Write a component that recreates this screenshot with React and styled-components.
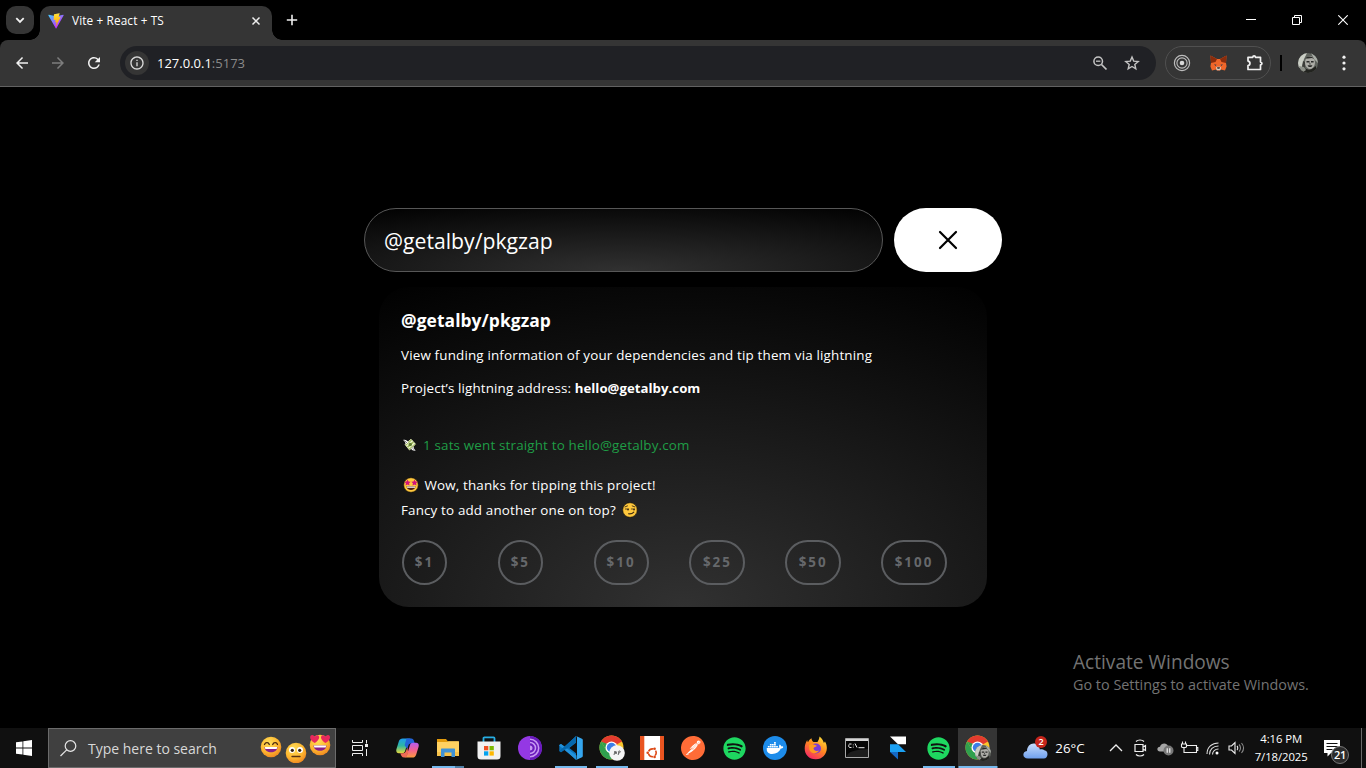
import React from "react";
import styled, { createGlobalStyle } from "styled-components";
import { MdArrowBack, MdArrowForward, MdRefresh, MdInfoOutline } from "react-icons/md";
import { FaDocker, FaSpotify } from "react-icons/fa";
import { SiPostman } from "react-icons/si";

const Global = createGlobalStyle`
  *, *::before, *::after { box-sizing: border-box; }
  html, body { margin: 0; background: #000; }
  body { font-family: "Open Sans", "Noto Sans", sans-serif; color: #fff; overflow: hidden; }
  svg { display: block; flex: none; }
`;

const Screen = styled.div`
  position: relative;
  width: 1366px;
  height: 768px;
  display: flex;
  flex-direction: column;
  background: #000;
  overflow: hidden;
`;

/* ---------- browser chrome ---------- */

const TabStrip = styled.header`
  height: 40px;
  display: flex;
  align-items: flex-start;
  padding: 6px 0 0 6px;
`;

const TabSearch = styled.button`
  width: 28px;
  height: 28px;
  padding: 0;
  border: 0;
  border-radius: 10px;
  background: #353535;
  display: grid;
  place-items: center;
`;

const Tab = styled.div`
  position: relative;
  width: 232px;
  height: 34px;
  margin-left: 6px;
  padding: 0 9px 5px 8px;
  display: flex;
  align-items: center;
  border-radius: 10px 10px 0 0;
  background: #353535;
  &::before, &::after {
    content: "";
    position: absolute;
    bottom: 0;
    width: 10px;
    height: 10px;
  }
  &::before { left: -10px; background: radial-gradient(circle at 0 0, transparent 9.5px, #353535 10px); }
  &::after { right: -10px; background: radial-gradient(circle at 100% 0, transparent 9.5px, #353535 10px); }
`;

const TabTitle = styled.span`
  flex: 1;
  margin-left: 8px;
  padding-bottom: 1px;
  font-size: 11.8px;
  letter-spacing: 0.12px;
  white-space: nowrap;
`;

const NewTab = styled.div`
  margin-left: 14px;
  padding-top: 8px;
`;

const WindowButtons = styled.div`
  margin-left: auto;
  display: flex;
  & > * { width: 46px; height: 28px; display: grid; place-items: center; }
`;

const Toolbar = styled.nav`
  height: 47px;
  display: flex;
  align-items: center;
  padding: 0 16px 0 13px;
  background: #353535;
  border-bottom: 1px solid #626262;
  border-radius: 8px 8px 0 0;
`;

const NavIcons = styled.div`
  display: flex;
  gap: 18px;
  color: #f1f1f1;
  & > :nth-child(2) { color: #7d7d7d; }
`;

const AddressBar = styled.div`
  width: 1036px;
  height: 34px;
  margin-left: 17px;
  padding: 0 16px 0 5px;
  display: flex;
  align-items: center;
  border-radius: 17px;
  background: #202125;
  color: #c4c4c4;
`;

const SiteInfo = styled.span`
  width: 24px;
  height: 24px;
  border-radius: 50%;
  background: #353535;
  color: #dadada;
  display: grid;
  place-items: center;
`;

const Url = styled.span`
  flex: 1;
  margin-left: 8px;
  font-size: 13px;
  color: #fff;
`;

const Port = styled.span`
  color: #8b8b8b;
`;

const AddressActions = styled.div`
  display: flex;
  align-items: center;
  gap: 16px;
`;

const Extensions = styled.div`
  width: 106px;
  height: 34px;
  margin-left: 9px;
  padding: 0 6px 0 7px;
  display: flex;
  align-items: center;
  justify-content: space-between;
  border: 1px solid #505050;
  border-radius: 17px;
`;

const Divider = styled.span`
  width: 2px;
  height: 16px;
  margin: 0 16px 0 9px;
  background: #000;
`;

const MenuDots = styled.div`
  margin-left: auto;
  padding-right: 4px;
`;

/* ---------- page ---------- */

const Page = styled.main`
  flex: 1;
  padding-top: 121px;
  display: flex;
  flex-direction: column;
  align-items: center;
`;

const SearchRow = styled.div`
  display: flex;
  gap: 11px;
`;

const PackageField = styled.div`
  width: 519px;
  height: 64px;
  padding: 1px 0 0 19px;
  display: flex;
  align-items: center;
  border: 1px solid #575757;
  border-radius: 32px;
  background: radial-gradient(480px 76px at 50% 100%, #313131 0%, #000 100%);
  font-size: 21.2px;
`;

const ClearButton = styled.button`
  width: 108px;
  height: 64px;
  padding: 0;
  border: 0;
  border-radius: 32px;
  background: #fff;
  display: grid;
  place-items: center;
`;

const Card = styled.section`
  width: 608px;
  height: 320px;
  margin-top: 15px;
  padding: 21px 11px 0 22px;
  border-radius: 30px;
  background: radial-gradient(620px 372px at 50% 100%, #313131 0%, #000 100%);
`;

const Title = styled.h1`
  margin: 0;
  height: 24px;
  line-height: 24px;
  font-size: 17.4px;
  font-weight: 700;
  letter-spacing: 0.08px;
`;

const Line = styled.p`
  height: 25px;
  margin: ${(p) => p.$top || 0}px 0 0;
  padding: 0 0 2px ${(p) => p.$indent || 0}px;
  display: flex;
  align-items: center;
  gap: ${(p) => p.$gap || 0}px;
  font-size: 13.4px;
  white-space: pre;
  color: ${(p) => p.$color || "#fff"};
  letter-spacing: ${(p) => p.$ls || 0}px;
`;

const Address = styled.b`
  font-weight: 700;
  font-size: 13.2px;
  letter-spacing: 0.04px;
`;

const Tips = styled.div`
  margin-top: 17px;
  padding-left: 1px;
  display: grid;
  grid-template-columns: repeat(6, 95.8px);
  justify-items: start;
`;

const Tip = styled.button`
  width: ${(p) => p.$w}px;
  height: 45px;
  padding: 0 0 2px 0;
  border: 2px solid #5b5d60;
  border-radius: 23px;
  background: transparent;
  color: #66686b;
  font: 700 13.4px "Open Sans", sans-serif;
  letter-spacing: 2px;
`;

const Watermark = styled.aside`
  position: absolute;
  left: 1073px;
  top: 650px;
  color: #737373;
  white-space: nowrap;
  & > div { height: 24px; line-height: 24px; font-size: 19.1px; }
  & > p { margin: 0; height: 22px; line-height: 22px; font-size: 14.4px; }
`;

/* ---------- taskbar ---------- */

const Taskbar = styled.footer`
  height: 40px;
  display: flex;
  align-items: stretch;
  background: #101010;
`;

const Start = styled.div`
  width: 48px;
  display: grid;
  place-items: center;
`;

const SearchBox = styled.div`
  width: 288px;
  padding: 0 3px 0 11px;
  display: flex;
  align-items: center;
  border: 1px solid #6b6b6b;
  background: #404040;
  color: #d8d8d8;
  font-size: 14px;
  & > span { flex: 1; margin-left: 11px; white-space: nowrap; }
`;

const TaskView = styled.div`
  width: 48px;
  display: grid;
  place-items: center;
`;

const Apps = styled.div`
  margin-left: 3.2px;
  display: flex;
`;

const AppSlot = styled.div`
  position: relative;
  width: ${(p) => (p.$active ? 39 : 40.9)}px;
  margin-left: ${(p) => (p.$active ? -0.8 : 0)}px;
  display: grid;
  place-items: center;
  background: ${(p) => (p.$active ? "#353535" : "none")};
  &::after {
    content: "";
    display: ${(p) => (p.$running ? "block" : "none")};
    position: absolute;
    bottom: 0;
    left: 50%;
    width: ${(p) => (p.$active ? 39 : 32)}px;
    height: 2px;
    transform: translateX(-50%);
    background: ${(p) => (p.$multi ? "linear-gradient(90deg, #76b9ed 23px, #4f7fa5 23px)" : "#76b9ed")};
  }
`;

const Weather = styled.div`
  display: flex;
  align-items: center;
  gap: 6px;
  margin-left: 26px;
  width: 81px;
  font-size: 13.3px;
`;

const Tray = styled.div`
  display: flex;
  align-items: center;
  gap: 0.2px;
  & > svg { width: 24px; }
`;

const Clock = styled.div`
  width: 64px;
  padding-bottom: 1px;
  display: flex;
  flex-direction: column;
  justify-content: center;
  align-items: center;
  font-size: 11.3px;
  line-height: 18px;
  letter-spacing: -0.08px;
  white-space: nowrap;
`;

const Notifications = styled.div`
  position: relative;
  width: 48px;
  padding: 12px 0 0 11px;
  & > b {
    position: absolute;
    left: 18px;
    top: 18px;
    width: 18px;
    height: 18px;
    border: 1px solid #777;
    border-radius: 50%;
    background: #2b2b2b;
    font: 600 11px/16px "Open Sans", sans-serif;
    text-align: center;
    letter-spacing: -0.3px;
  }
`;

const ShowDesktop = styled.span`
  width: 5px;
  margin-left: auto;
  border-left: 1px solid #6a6a6a;
`;

/* ---------- drawings ---------- */

const ViteLogo = () => (
  <svg width="16" height="16" viewBox="0 0 410 404">
    <defs>
      <linearGradient id="va" x1="6" y1="33" x2="235" y2="344" gradientUnits="userSpaceOnUse"><stop stopColor="#41D1FF" /><stop offset="1" stopColor="#BD34FE" /></linearGradient>
      <linearGradient id="vb" x1="194" y1="9" x2="236" y2="293" gradientUnits="userSpaceOnUse"><stop stopColor="#FFEA83" /><stop offset=".08" stopColor="#FFDD35" /><stop offset="1" stopColor="#FFA800" /></linearGradient>
    </defs>
    <path fill="url(#va)" d="M399.641 59.5246L215.643 388.545C211.844 395.338 202.084 395.378 198.228 388.618L10.5817 59.5563C6.38087 52.1896 12.6802 43.2665 21.0281 44.7586L205.223 77.6824C206.398 77.8924 207.601 77.8904 208.776 77.6763L389.119 44.8058C397.439 43.2894 403.768 52.1434 399.641 59.5246Z" />
    <path fill="url(#vb)" d="M292.965 1.5744L156.801 28.2552C154.563 28.6937 152.906 30.5903 152.771 32.8664L144.395 174.33C144.198 177.662 147.258 180.248 150.51 179.498L188.42 170.749C191.967 169.931 195.172 173.055 194.443 176.622L183.18 231.775C182.422 235.487 185.907 238.661 189.532 237.56L212.947 230.446C216.577 229.344 220.065 232.527 219.297 236.242L201.398 322.875C200.278 328.294 207.486 331.249 210.492 326.603L212.5 323.5L323.454 102.072C325.312 98.3645 322.108 94.137 318.036 94.9228L279.014 102.454C275.347 103.161 272.227 99.746 273.262 96.1583L298.731 7.86689C299.767 4.27314 296.636 0.855181 292.965 1.5744Z" />
  </svg>
);

const ZoomOutIcon = () => (
  <svg width="16" height="16" viewBox="0 0 16 16" fill="none" stroke="currentColor">
    <circle cx="6.200" cy="6.200" r="4.300" strokeWidth="1.500" /><path d="M4 6.200h4.400" strokeWidth="1.300" /><path d="m9.500 9.500 5 5" strokeWidth="1.700" />
  </svg>
);

const StarIcon = () => (
  <svg width="16" height="16" viewBox="0 0 16 16" fill="none" stroke="currentColor" strokeWidth="1.400">
    <path d="m8 2 1.700 4.100 4.500.4-3.400 2.900 1 4.400L8 11.500l-3.800 2.300 1-4.400-3.400-2.900 4.500-.4Z" />
  </svg>
);

const TargetIcon = () => (
  <svg width="18" height="18" viewBox="0 0 18 18" fill="none" stroke="#bdbdbd">
    <circle cx="9" cy="9" r="7.6" strokeWidth="1.200" /><circle cx="9" cy="9" r="5.100" strokeWidth="1.100" /><circle cx="9" cy="9" r="2.300" fill="#d8d8d8" stroke="none" />
  </svg>
);

const Fox = () => (
  <svg width="17" height="16" viewBox="0 0 17 16">
    <path d="M.5.5 7 4h3L16.500.5 16 8l.6 3.500L15 15.500l-4-1-1.200 1H7.200L6 14.500l-4 1L.4 11.500 1 8Z" fill="#f0662a" />
    <path d="M.5.5 7 4 5.500 7 1 8ZM16.500.5 10 4l1.500 3 4.500 1Z" fill="#8a2c0c" />
    <path d="M4 9.300l2.500.4-.8 1.300ZM13 9.300l-2.500.4.8 1.300Z" fill="#2e3b4a" />
    <path d="m6 12.500 1-.8h3l1 .8-.7 2.700H6.700Z" fill="#d9cfc6" /><path d="M7 12.300h3l-.5 1.500h-2Z" fill="#33261f" />
  </svg>
);

const PuzzleIcon = () => (
  <svg width="18" height="18" viewBox="0 0 18 18" fill="none" stroke="#f1f1f1" strokeWidth="1.700" strokeLinejoin="round">
    <path d="M2 3.300h4.700c.2-1.900 2.600-1.900 2.800 0h5v4.800c1.900.2 1.900 2.600 0 2.800v4.600H2v-3.900c2.600-.3 2.600-4.200 0-4.500Z" />
  </svg>
);

const Portrait = ({ size = 20 }) => (
  <svg width={size} height={size} viewBox="0 0 20 20">
    <clipPath id="pc"><circle cx="10" cy="10" r="10" /></clipPath>
    <g clipPath="url(#pc)">
      <rect width="20" height="20" fill="#5f635d" /><path d="M0 0h9l-3 6-2 8-4 1Z" fill="#c9cdc4" />
      <path d="M13 0h7v10l-4-4Z" fill="#a9ada6" /><ellipse cx="12" cy="9.500" rx="5" ry="6.500" fill="#adada7" />
      <path d="M7.500 5.500c2-3 7.500-2.500 8.500.5l-2-1-4 .5ZM8.500 8h3v1.600h-3ZM13 8h2.600v1.600H13ZM9.500 12.300h5l-1.200 1.600h-2.600Z" fill="#2b2c2a" />
      <path d="M7 9v6l2 3-3 1-2-5 1-6ZM11.800 9l1 2.500h-1.600Z" fill="#3b3d39" />
      <path d="M3 20c1-5 4-5 7-3.500s6-2.500 8-3.500v7Z" fill="#22231f" /><path d="M1 13l5 1 2 3-4 3Z" fill="#8c9088" />
    </g>
  </svg>
);

const Money = () => (
  <svg width="15" height="14" viewBox="0 0 15 14">
    <path d="m3 6.500 6-5.300 4.500 5L7.500 12Z" fill="#9fb85c" stroke="#e3efb5" strokeWidth=".8" />
    <path d="m4.500 8 6-5.300M6.500 10.300l6-5.300" stroke="#f2f8d6" strokeWidth="1.200" /><circle cx="8.300" cy="6.500" r="1.700" fill="#5c7a2f" />
    <path d="M1 2c2-.8 4 0 5.500 2.200L3.800 6.500C3.500 4.500 2.700 3 1 2ZM13.800 12.500c-2 .5-3.800-.3-4.800-1.800l2.500-2.200c.3 2 1 3 2.300 4Z" fill="#fff" />
    <path d="M2.500 2.500 5 5M12.300 11.800 10.300 10" stroke="#333" strokeWidth=".6" />
  </svg>
);

const StarEyes = () => (
  <svg width="16" height="16" viewBox="0 0 16 16">
    <circle cx="8" cy="8" r="7.300" fill="#ffc83d" stroke="#1a1205" strokeWidth=".6" />
    <path d="m4.500 2.500 1 2 2.200.3-1.600 1.500.4 2.200-2-1-2 1 .4-2.200L1.300 4.800l2.200-.3ZM11.500 2.500l1 2 2.200.3-1.600 1.500.4 2.200-2-1-2 1 .4-2.200-1.600-1.500 2.200-.3Z" fill="#d2127c" />
    <path d="M3.500 9.300h9c0 5-9 5-9 0Z" fill="#4a1a10" /><path d="M3.900 9.500h8.200v1.300H4.100Z" fill="#fff" />
  </svg>
);

const Smirk = () => (
  <svg width="16" height="16" viewBox="0 0 16 16" fill="none" stroke="#3b2a12" strokeLinecap="round">
    <circle cx="8" cy="8" r="7.300" fill="#ffc83d" stroke="#1a1205" strokeWidth=".6" />
    <path d="M3 4.900 5.500 3.900M10.200 3.900l2.600 1" strokeWidth=".9" />
    <path d="M3.300 7h3.400M9.300 7h3.400" strokeWidth=".8" /><circle cx="6" cy="7.600" r=".9" fill="#3b2a12" stroke="none" /><circle cx="12" cy="7.600" r=".9" fill="#3b2a12" stroke="none" />
    <path d="M6.500 11.800c2.300.3 4-.2 5.300-1.700" strokeWidth="1.100" />
  </svg>
);

const SearchEmojis = () => (
  <svg width="72" height="30" viewBox="0 0 72 30">
    <defs>
      <radialGradient id="em" cx=".4" cy=".3" r=".75"><stop stopColor="#ffdf5a" /><stop offset=".6" stopColor="#fdb62f" /><stop offset="1" stopColor="#ee8420" /></radialGradient>
    </defs>
    <circle cx="11" cy="14" r="10.300" fill="url(#em)" />
    <path d="M4.500 11.500c1-2.500 4-2.500 4.800 0M12.700 11.500c1-2.500 4-2.500 4.800 0" stroke="#46230c" strokeWidth="1.300" fill="none" strokeLinecap="round" />
    <path d="M4.500 14h13c-.2 7-12.800 7-13 0Z" fill="#8a1f86" /><path d="M4.800 14h12.400l-.5 2H5.300Z" fill="#fff" />
    <circle cx="36" cy="20" r="10.300" fill="url(#em)" />
    <circle cx="32" cy="17" r="3" fill="#fff" /><circle cx="40" cy="17" r="3" fill="#fff" /><circle cx="32.300" cy="17.300" r="1.600" fill="#33200f" /><circle cx="39.700" cy="17.300" r="1.600" fill="#33200f" />
    <path d="M32 23.500h8" stroke="#5a3212" strokeWidth="1.400" strokeLinecap="round" />
    <circle cx="60" cy="12" r="10.300" fill="url(#em)" />
    <path d="M54.700 10c-6-3.300-5.200-8-2.500-8 1.500 0 2.300 1.200 2.500 2 .6-1.200 1.700-2 3-1.700 2.700.7 1.700 5.200-3 7.700ZM65.500 10c-4.700-2.500-5.700-7-3-7.700 1.300-.3 2.400.5 3 1.700.2-.8 1-2 2.500-2 2.700 0 3.500 4.700-2.500 8Z" fill="#e9285c" />
    <path d="M53.500 12.500h13c-.2 7-12.800 7-13 0Z" fill="#8a1f86" /><path d="M53.800 12.500h12.400l-.5 2H54.300Z" fill="#fff" />
  </svg>
);

const Copilot = () => (
  <svg width="23" height="22" viewBox="0 0 24 22">
    <defs>
      <linearGradient id="c1" x1="0" y1="0" x2="0" y2="1"><stop stopColor="#1c9cf0" /><stop offset=".5" stopColor="#2fb6a0" /><stop offset="1" stopColor="#e8d93b" /></linearGradient>
      <linearGradient id="c2" x1="0" y1="0" x2="0" y2="1"><stop stopColor="#b55cf2" /><stop offset=".5" stopColor="#f2608f" /><stop offset="1" stopColor="#fb9a3c" /></linearGradient>
    </defs>
    <path d="M7 1h9c-2 0-3 1.500-3.500 3L9.500 14c-.6 1.700-1.500 2.500-3.500 2.500H3C.5 16.500-.2 14.500.5 12L3 4c.7-2 2-3 4-3Z" fill="url(#c1)" />
    <path d="M11 1h5c1.500 0 2.300 1 2.800 2.800L19.500 6h-3c-2.200 0-3.200 1-3.800 3l-1 3L9 8Z" fill="#2263d8" />
    <path d="M17 21H8c2 0 3-1.500 3.500-3l3-10c.6-1.700 1.500-2.500 3.500-2.500h3c2.500 0 3.200 2 2.500 4.500L21 18c-.7 2-2 3-4 3Z" fill="url(#c2)" />
    <path d="M4.500 16.500h3c1.500 0 2.200-.6 2.800-2l1.500-4 1 5.500-1.300 2.800C10.800 20.400 9.800 21 8.500 21 6 21 5.500 19 4.500 16.500Z" fill="#ee6b55" />
  </svg>
);

const Explorer = () => (
  <svg width="24" height="22" viewBox="0 0 24 22">
    <path d="M1 2h9l2 2.500h10V8H1Z" fill="#e39b0c" /><path d="M1 5h10l1.500-.8H23V19H1Z" fill="#ffd161" /><path d="M1 15h22v4H1Z" fill="#f7c24a" />
    <path d="M6 11.500h12c.8 0 1 .4 1 1V20h-3.500v-4.500h-7V20H5v-7.500c0-.6.2-1 1-1Z" fill="#3f92d6" />
  </svg>
);

const Store = () => (
  <svg width="24" height="24" viewBox="0 0 24 24">
    <path d="M6.500 7V2.300c0-.6.300-.9.900-.9h9.200c.6 0 .9.300.9.900V7" fill="none" stroke="#27aee3" strokeWidth="1.800" />
    <path d="M.5 5.500h23V20c0 2.500-1 3.500-3.500 3.500H4C1.500 23.500.5 22.500.5 20Z" fill="#f1f1f1" />
    <path d="M7 10h4.300v4.300H7Z" fill="#f05022" /><path d="M12.500 10h4.300v4.300h-4.300Z" fill="#7cb900" /><path d="M7 15.300h4.300v4.300H7Z" fill="#05a3ef" /><path d="M12.500 15.300h4.300v4.300h-4.300Z" fill="#feb800" />
  </svg>
);

const Tor = () => (
  <svg width="24" height="24" viewBox="0 0 24 24">
    <circle cx="12" cy="12" r="12" fill="#9438e4" /><path d="M12 0a12 12 0 0 1 0 24Z" fill="#6a1bbd" />
    <path d="M12 3.300a8.700 8.700 0 0 1 0 17.400M12 6.500a5.500 5.500 0 0 1 0 11" fill="none" stroke="#c79af2" strokeWidth="1.500" /><path d="M12 9.500a2.500 2.500 0 0 1 0 5Z" fill="#c79af2" />
  </svg>
);

const VsCode = () => (
  <svg width="24" height="24" viewBox="0 0 24 24">
    <path d="M17 0 5.800 10.800 2 7.900.3 9v6L2 16.200l3.800-3L17 24V17.300L10.300 12 17 6.700Z" fill="#0b76c0" />
    <path d="M.3 9 2 7.900 17.500 19.500V24L.4 9.800Z" fill="#2393dc" /><path d="M2 16.200.3 15 17 .3V6.500Z" fill="#0668ad" />
    <path d="m17 0 6 2.700c.5.300.8.600.8 1.200v16.200c0 .6-.3.900-.8 1.200L17 24c.7-.5 1-1 1-1.800V1.800C18 1 17.700.5 17 0Z" fill="#35a6ee" />
  </svg>
);

const Chrome = ({ children }) => (
  <svg width="26" height="26" viewBox="0 0 26 26">
    <circle cx="12.500" cy="12.500" r="12" fill="#f9c52b" />
    <g transform="translate(.5 .5)">
      <path d="M12 12 1.600 6A12 12 0 0 1 22.400 6Z" fill="#e33b2e" /><path d="M1.600 6A12 12 0 0 0 12 24l5.200-9L12 12 6.800 15Z" fill="#2fa04e" />
      <path d="M1.600 6 6.800 15 9 9Z" fill="#2fa04e" /><path d="M12 6.500h10.700L22.400 6H12Z" fill="#e33b2e" />
      <circle cx="12" cy="12" r="6" fill="#fff" /><circle cx="12" cy="12" r="4.700" fill="#3b7de8" />
      {children}
    </g>
  </svg>
);

const Ubuntu = () => (
  <svg width="24" height="24" viewBox="0 0 24 24">
    <path d="M0 0h24v24H0Z" fill="#fff" /><path d="M0 0h4.300v24H0ZM20 0h4v24h-4Z" fill="#e95420" />
    <circle cx="12.300" cy="16.800" r="3.900" fill="none" stroke="#dd4814" strokeWidth="1.600" strokeDasharray="5.800 2.370" strokeDashoffset="2.900" />
    <circle cx="7.700" cy="16.800" r="1.300" fill="#dd4814" /><circle cx="14.600" cy="12.700" r="1.300" fill="#dd4814" /><circle cx="14.600" cy="20.900" r="1.300" fill="#dd4814" />
  </svg>
);

const Postman = () => (
  <svg width="24" height="24" viewBox="0 0 24 24"><circle cx="12" cy="12" r="11" fill="#fff" /><SiPostman size={24} color="#ff6c37" /></svg>
);

const Spotify = () => <FaSpotify size={23} color="#1ed760" />;

const Docker = () => (
  <svg width="24" height="24" viewBox="0 0 24 24"><circle cx="12" cy="12" r="12" fill="#1d8cea" /><g transform="translate(3.500 3.500)"><FaDocker size={17} color="#fff" /></g></svg>
);

const Firefox = () => (
  <svg width="24" height="24" viewBox="0 0 24 24">
    <defs><linearGradient id="ff" x1=".8" y1="0" x2=".2" y2="1"><stop stopColor="#ffe03a" /><stop offset=".45" stopColor="#ff8a1f" /><stop offset="1" stopColor="#f5206a" /></linearGradient></defs>
    <path d="M15.500.5c3 2.500 4 4.500 4.200 6.300 1-.2 1.200-1 1.200-1.500 5 8-.2 18-8.900 18C5 23.500.7 18.500.7 12.500c0-3.500 1-6 2.500-8.500 0 1 .3 1.700.8 2.300.8-2 2.200-3.300 3.500-4 0 1.500.6 2.800 2 3.700h4c.8-1.500 1.800-3 2-5.500Z" fill="url(#ff)" />
    <circle cx="12" cy="12.500" r="5" fill="#7a3ad6" /><path d="M5 9c3-1.500 6 0 8 1-1 1-3 .8-3.500 2.300 0 2 3 3.500 5.500 2.200-2 4-8.500 3.500-9.700-1Z" fill="#ff9a1f" />
  </svg>
);

const Terminal = () => (
  <svg width="24" height="20" viewBox="0 0 24 20">
    <path d="M.5.5h23v19H.5Z" fill="#050505" stroke="#a8a8a8" /><path d="M1 1h22v2H1Z" fill="#d5d5d5" />
    <path d="M6.500 6h-2c-1 0-1 3.500 0 3.500h2M8.300 6.500v.8M8.300 8.700v.8M10 5.500l2 4M13.500 9.700h6" stroke="#e9e9e9" fill="none" />
    <path d="M1 19c3-6 8-7 22-8v8Z" fill="#1d1d1d" />
  </svg>
);

const Framer = () => (
  <svg width="16" height="24" viewBox="0 0 16 24">
    <path d="M0 .5h16v7.800H8Z" fill="#fff" /><path d="M0 8.300h8l8 7.700H0Z" fill="#1ba0f2" /><path d="M0 16h8v7.500Z" fill="#1568c4" />
  </svg>
);

const TIPS = [["$1", 45], ["$5", 45], ["$10", 55], ["$25", 56], ["$50", 56], ["$100", 66]];

const APPS = [
  { icon: <Copilot /> },
  { icon: <Explorer />, running: true, multi: true },
  { icon: <Store /> },
  { icon: <Tor /> },
  { icon: <VsCode />, running: true },
  { icon: <Chrome><circle cx="17.500" cy="17.500" r="7.800" fill="#f4f4f4" /><path d="m14.500 19.500 1-4 1 3 .7-2.500M18.700 19.500l.7-4c2-.3 2 1.500 0 2" stroke="#444" strokeWidth=".8" fill="none" /></Chrome>, running: true },
  { icon: <Ubuntu /> },
  { icon: <Postman /> },
  { icon: <Spotify /> },
  { icon: <Docker /> },
  { icon: <Firefox /> },
  { icon: <Terminal /> },
  { icon: <Framer /> },
  { icon: <Spotify />, running: true },
  { icon: <Chrome><g transform="translate(9.500 9.500)"><Portrait size={16} /></g></Chrome>, running: true, active: true },
];

export default function App() {
  return (
    <Screen>
      <Global />
      <TabStrip>
        <TabSearch><svg width="10" height="10" viewBox="0 0 10 10"><path d="m1.300 3.200 3.700 3.700 3.700-3.700" fill="none" stroke="#f1f1f1" strokeWidth="1.800" /></svg></TabSearch>
        <Tab>
          <ViteLogo />
          <TabTitle>Vite + React + TS</TabTitle>
          <svg width="14" height="14" viewBox="0 0 14 14"><path d="m3.500 3.500 7 7m0-7-7 7" stroke="#eee" strokeWidth="1.500" /></svg>
        </Tab>
        <NewTab><svg width="12" height="12" viewBox="0 0 12 12"><path d="M6 .8v10.400M.8 6h10.400" stroke="#eee" strokeWidth="1.600" /></svg></NewTab>
        <WindowButtons>
          <span><svg width="10" height="10" viewBox="0 0 10 10"><path d="M0 4.500h10" stroke="#fff" /></svg></span>
          <span><svg width="10" height="10" viewBox="0 0 10 10"><path d="M.5 2.500h7v7h-7ZM2.500 2.500v-2h7v7h-2" fill="none" stroke="#fff" /></svg></span>
          <span><svg width="10" height="10" viewBox="0 0 10 10"><path d="m.3.3 9.400 9.400m0-9.400L.3 9.700" stroke="#fff" strokeWidth="1.100" /></svg></span>
        </WindowButtons>
      </TabStrip>
      <Toolbar>
        <NavIcons><MdArrowBack size={18} /><MdArrowForward size={18} /><MdRefresh size={18} /></NavIcons>
        <AddressBar>
          <SiteInfo><MdInfoOutline size={16} /></SiteInfo>
          <Url>127.0.0.1<Port>:5173</Port></Url>
          <AddressActions><ZoomOutIcon /><StarIcon /></AddressActions>
        </AddressBar>
        <Extensions><TargetIcon /><Fox /><PuzzleIcon /></Extensions>
        <Divider />
        <Portrait />
        <MenuDots><svg width="4" height="16" viewBox="0 0 4 16" fill="#f1f1f1"><circle cx="2" cy="2.200" r="1.600" /><circle cx="2" cy="8" r="1.600" /><circle cx="2" cy="13.800" r="1.600" /></svg></MenuDots>
      </Toolbar>

      <Page>
        <SearchRow>
          <PackageField>@getalby/pkgzap</PackageField>
          <ClearButton><svg width="20" height="20" viewBox="0 0 20 20"><path d="m2 2 16 16m0-16L2 18" stroke="#000" strokeWidth="2.200" strokeLinecap="round" /></svg></ClearButton>
        </SearchRow>
        <Card>
          <Title>@getalby/pkgzap</Title>
          <Line $top={11} $ls={0.17}>View funding information of your dependencies and tip them via lightning</Line>
          <Line $top={8} $ls={0.13}><span>Project’s lightning address: </span><Address>hello@getalby.com</Address></Line>
          <Line $top={32} $color="#1f9d46" $gap={6} $indent={1} $ls={0.17}><Money /><span>1 sats went straight to hello@getalby.com</span></Line>
          <Line $top={15} $gap={6} $indent={1.5} $ls={0.16}><StarEyes /><span>Wow, thanks for tipping this project!</span></Line>
          <Line $gap={6} $ls={0.16}><span>Fancy to add another one on top?</span><Smirk /></Line>
          <Tips>{TIPS.map(([label, w]) => <Tip key={label} $w={w}>{label}</Tip>)}</Tips>
        </Card>
      </Page>

      <Watermark><div>Activate Windows</div><p>Go to Settings to activate Windows.</p></Watermark>

      <Taskbar>
        <Start><svg width="16" height="16" viewBox="0 0 16 16" fill="#fff"><path d="M0 2.300 6.500 1.400v6.200H0ZM7.300 1.300 16 0v7.600H7.300ZM0 8.400h6.500v6.200L0 13.700ZM7.300 8.400H16V16l-8.700-1.300Z" /></svg></Start>
        <SearchBox>
          <svg width="17" height="17" viewBox="0 0 17 17" fill="none" stroke="#e6e6e6" strokeWidth="1.200"><circle cx="10.500" cy="6" r="5.300" /><path d="M6.700 9.800.5 16" /></svg>
          <span>Type here to search</span>
          <SearchEmojis />
        </SearchBox>
        <TaskView>
          <svg width="16" height="16" viewBox="0 0 16 16" fill="none" stroke="#eee"><path d="M.5 0v2.500h10V0M.5 16v-2.500h10V16M.5 5.500h10v5H.5ZM14.500 0v3.500M14.500 9v7" /><path d="M13 4h3v3h-3Z" fill="#eee" stroke="none" /></svg>
        </TaskView>
        <Apps>{APPS.map((a, i) => <AppSlot key={i} $running={a.running} $multi={a.multi} $active={a.active}>{a.icon}</AppSlot>)}</Apps>
        <Weather>
          <svg width="26" height="24" viewBox="0 0 26 24">
            <defs><linearGradient id="wc" x1="0" y1="0" x2="0" y2="1"><stop stopColor="#c7dcfb" /><stop offset="1" stopColor="#6fa0ee" /></linearGradient></defs>
            <path d="M5 22.500c-6 0-6-7-1-7.500C4 9 10 5.500 14.500 9c1.700 1.500 2.200 3 2.300 4.500 2-.7 3.500-.2 4.500.8 4.500.3 4.200 8.200-.6 8.200Z" fill="url(#wc)" />
            <circle cx="18" cy="6" r="6" fill="#c7261c" /><text x="18" y="9.300" fontSize="9" fontWeight="600" fill="#fff" textAnchor="middle">2</text>
          </svg>
          <span>26°C</span>
        </Weather>
        <Tray>
          <svg height="16" viewBox="0 0 24 16" fill="none" stroke="#eee" strokeWidth="1.300"><path d="m6 11 6-6 6 6" /></svg>
          <svg height="18" viewBox="0 0 24 18" fill="none" stroke="#eee" strokeWidth="1.200"><path d="M7 5.500h8v7H7ZM15 8l2.500-1.500v5L15 10M8 2.500c2-2 6-2 8 0M8 15.500c2 2 6 2 8 0" /></svg>
          <svg height="16" viewBox="0 0 24 16"><path d="M7 11.500c-3.500 0-3.500-4.500 0-4.700C8 2.500 14 2.500 15 6c4 0 4.500 5.500.5 5.500Z" fill="#a6a6a6" /><circle cx="15.500" cy="10.500" r="5" fill="#777" /><path d="M14.200 8.300v4.400M16.800 8.300v4.400" stroke="#fff" strokeWidth="1.100" /></svg>
          <svg height="16" viewBox="0 0 24 16" fill="none" stroke="#eee" strokeWidth="1.100"><path d="M9.500 5.500h10v7h-9M19.500 7.500h1.300v3h-1.300M5.500 1.500v2.500M8.500 1.500v2.500M4.500 4h5v2.500c0 1.500-5 1.500-5 0ZM7 8v4.500h4" /></svg>
          <svg height="16" viewBox="0 0 24 16" fill="none" stroke="#ddd" strokeWidth="1.100"><path d="M6 14C6 7 11 3 17.500 3M8.500 14.500C8.500 9.500 12 6 17.500 6M11.500 14.500c0-3 2.500-5.500 6-5.500" /><circle cx="16" cy="13" r="1.500" fill="#fff" stroke="none" /></svg>
          <svg height="16" viewBox="0 0 24 16" fill="none" stroke="#eee" strokeWidth="1.100"><path d="M4 6h2.500l3.500-3.500v11L6.500 10H4Z" /><path d="M12 6c1 1 1 3 0 4" /><path d="M14 4.500c2 2 2 5 0 7M16.500 3c2.500 3 2.500 7 0 10" stroke="#8a8a8a" /></svg>
        </Tray>
        <Clock><span>4:16 PM</span><span>7/18/2025</span></Clock>
        <Notifications>
          <svg width="16" height="17" viewBox="0 0 16 17"><path d="M0 0h16v13H7l-3.500 3.500V13H0Z" fill="#fff" /><path d="M2.500 3.500h11M2.500 6.500h11M2.500 9.500h6" stroke="#101010" /></svg>
          <b>21</b>
        </Notifications>
        <ShowDesktop />
      </Taskbar>
    </Screen>
  );
}
